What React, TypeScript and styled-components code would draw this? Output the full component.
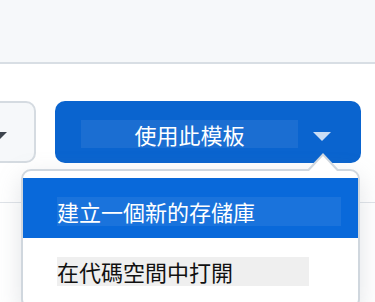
import styled, { createGlobalStyle } from "styled-components";

const GlobalStyle = createGlobalStyle`
    html, body {
        margin: 0;
        padding: 0;
        background: #ffffff;
        overflow: hidden;
    }
    body {
        font-family: "Noto Sans CJK TC", "Noto Sans", sans-serif;
    }
`;

interface MenuItemProps {
    active?: boolean;
}

interface LabelProps {
    w: number;
}

export default function App() {
    return <Page>
        <GlobalStyle />
        <Header />
        <Body>
            <ButtonRow>
                <SecondaryButton>
                    <Caret $color="#3d444d" />
                </SecondaryButton>
                <Anchor>
                    <PrimaryButton>
                        <ButtonLabel>使用此模板</ButtonLabel>
                        <Caret $color="rgba(255,255,255,0.78)" />
                    </PrimaryButton>
                    <Menu>
                        <Pointer />
                        <MenuItem active>
                            <ItemLabel w={284} active>建立一個新的存儲庫</ItemLabel>
                        </MenuItem>
                        <MenuItem>
                            <ItemLabel w={252}>在代碼空間中打開</ItemLabel>
                        </MenuItem>
                    </Menu>
                </Anchor>
            </ButtonRow>
            <Divider />
        </Body>
    </Page>
};

const Page = styled.div`
    width: 375px;
    height: 302px;
    overflow: hidden;
`;

const Header = styled.header`
    height: 62px;
    background: #f6f8fa;
    border-bottom: 2px solid #d8dee4;
`;

const Body = styled.main`
    padding-top: 37px;
`;

const ButtonRow = styled.div`
    display: flex;
    justify-content: flex-end;
    gap: 19px;
    padding-right: 14px;
`;

const SecondaryButton = styled.div`
    flex: 0 0 auto;
    width: 72px;
    height: 62px;
    box-sizing: border-box;
    display: flex;
    align-items: center;
    justify-content: flex-end;
    padding: 4px 27px 0 0;
    background: #f6f8fa;
    border: 2px solid #d5dbe1;
    border-radius: 10px;
`;

const Caret = styled.span<{ $color: string }>`
    flex: 0 0 auto;
    width: 0;
    height: 0;
    margin-top: 5px;
    border-style: solid;
    border-width: 9px 9.5px 0 9.5px;
    border-color: ${p => p.$color} transparent transparent transparent;
`;

const Anchor = styled.div`
    position: relative;
    flex: 0 0 auto;
`;

const PrimaryButton = styled.div`
    width: 306px;
    height: 62px;
    box-sizing: border-box;
    display: flex;
    align-items: center;
    gap: 15px;
    padding: 4px 29px 0 26px;
    background: #0a64cf;
    border-radius: 10px;
`;

const ButtonLabel = styled.span`
    display: block;
    width: 217px;
    height: 28px;
    line-height: 28px;
    text-align: center;
    font-size: 22px;
    color: #ffffff;
    background: rgba(255, 255, 255, 0.07);
`;

const Menu = styled.div`
    position: absolute;
    top: 68px;
    left: -34px;
    width: 339px;
    height: 140px;
    box-sizing: border-box;
    padding-top: 7px;
    background: #ffffff;
    border: 2px solid #d0d7de;
    border-radius: 10px;
    box-shadow: 0 8px 24px rgba(140, 149, 159, 0.25);
    z-index: 10;
`;

const Pointer = styled.span`
    position: absolute;
    top: -18px;
    right: 19px;
    width: 0;
    height: 0;
    border-style: solid;
    border-width: 0 16px 17px 16px;
    border-color: transparent transparent #d0d7de transparent;

    &::after {
        content: "";
        position: absolute;
        top: 2.5px;
        left: -14px;
        border-style: solid;
        border-width: 0 14px 15px 14px;
        border-color: transparent transparent #ffffff transparent;
    }
`;

const MenuItem = styled.div<MenuItemProps>`
    height: 60px;
    box-sizing: border-box;
    display: flex;
    align-items: center;
    padding: 7px 0 0 34px;
    background: ${p => p.active ? "#0969da" : "transparent"};
`;

const ItemLabel = styled.span<LabelProps & MenuItemProps>`
    display: block;
    width: ${p => p.w}px;
    height: 29px;
    line-height: 29px;
    font-size: 22px;
    white-space: nowrap;
    color: ${p => p.active ? "#ffffff" : "#111111"};
    background: ${p => p.active ? "rgba(255, 255, 255, 0.07)" : "#efefef"};
`;

const Divider = styled.div`
    margin-top: 39px;
    height: 1px;
    background: #dfe3e8;
`;
